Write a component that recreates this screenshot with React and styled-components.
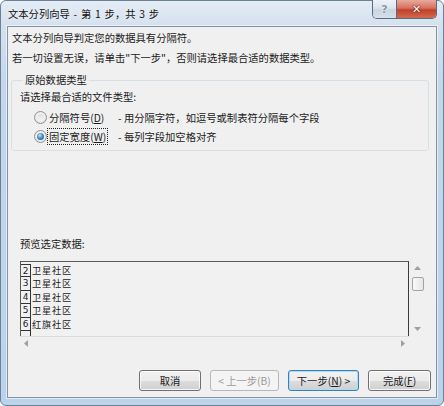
import React from 'react';
import styled, { createGlobalStyle, css } from 'styled-components';

const GlobalStyle = createGlobalStyle`
  html, body {
    margin: 0;
    padding: 0;
    background: #ffffff;
  }
  body {
    font-family: "Noto Sans CJK SC", "Liberation Sans", sans-serif;
    font-size: 10.3px;
    color: #1b1b1b;
  }
`;

const Window = styled.div`
  box-sizing: border-box;
  width: 444px;
  height: 406px;
  display: flex;
  flex-direction: column;
  padding: 0 6px 7px 6px;
  border: 1px solid #6d8196;
  border-radius: 6px;
  background: linear-gradient(180deg, #e4ecf5 0px, #d5e1ee 24px, #c4d7ec 80px, #bad2ea 100%);
`;

const TitleBar = styled.div`
  height: 25px;
  display: flex;
  align-items: flex-start;
  justify-content: space-between;
`;

const Title = styled.div`
  line-height: 25px;
  padding-left: 1px;
  word-spacing: 1.5px;
  color: #111;
  text-shadow: 0 0 6px rgba(255, 255, 255, 0.9);
`;

const Controls = styled.div`
  display: flex;
  margin-top: -1px;
  border: 1px solid #5b6c80;
  border-top: none;
  border-radius: 0 0 5px 5px;
  overflow: hidden;
`;

const CtrlButton = styled.div`
  height: 18px;
  width: ${p => p.$w}px;
  display: flex;
  align-items: center;
  justify-content: center;
  font-family: "DejaVu Sans", sans-serif;
  font-weight: bold;
  font-size: 11px;
  ${p => p.$close
    ? css`
        background: linear-gradient(180deg, #e9a99b 0%, #d7705f 45%, #c2402b 55%, #d06b4c 100%);
        color: #fff;
        text-shadow: 0 0 2px #5a1a10, 0 0 1px #5a1a10;
      `
    : css`
        background: linear-gradient(180deg, #eef3f8 0%, #dbe4ee 45%, #c8d4e2 55%, #d6e0eb 100%);
        color: #8a96a4;
        text-shadow: 0 0 2px #fff;
        border-right: 1px solid #5b6c80;
      `}
`;

const Client = styled.div`
  flex: 1;
  display: flex;
  flex-direction: column;
  background: #f0f0f0;
  border: 1px solid #8193a9;
  box-shadow: 0 0 0 1px rgba(255, 255, 255, 0.55);
`;

const Intro = styled.div`
  padding: 1px 0 0 4px;
  line-height: 20px;
`;

const GroupBox = styled.fieldset`
  margin: 4px 7px 0 3px;
  padding: 0 0 4px 8px;
  border: 1px solid #d5dfe5;
  border-radius: 3px;
  min-width: 0;
`;

const Legend = styled.legend`
  margin-left: 3px;
  padding: 0 2px;
  line-height: 16px;
`;

const Prompt = styled.div`
  line-height: 18px;
  margin-bottom: 2px;
`;

const RadioRow = styled.div`
  display: flex;
  align-items: center;
  height: 19px;
  padding-left: 14px;
`;

const Radio = styled.span`
  box-sizing: border-box;
  width: 13px;
  height: 13px;
  border-radius: 50%;
  border: 1px solid #929292;
  background: radial-gradient(circle at 50% 45%, #ffffff 0%, #f1f1f1 45%, #d6d6d6 100%);
  display: flex;
  align-items: center;
  justify-content: center;
  margin-right: 2px;
  &::after {
    content: '';
    width: 7px;
    height: 7px;
    border-radius: 50%;
    background: ${p => (p.$checked
      ? 'radial-gradient(circle at 40% 35%, #bfe6ff 0%, #4d8dbd 45%, #1b4f79 100%)'
      : 'linear-gradient(180deg, #dedede, #f4f4f4)')};
  }
`;

const RadioLabel = styled.span`
  width: 69px;
  line-height: 15px;
`;

const FocusText = styled.span`
  outline: 1px dotted #222;
  padding: 0 1px;
  margin-left: -1px;
`;

const Key = styled.span`
  text-decoration: underline;
`;

const Desc = styled.span`
  white-space: pre;
`;

const PreviewLabel = styled.div`
  margin-top: 85px;
  padding-left: 12px;
  line-height: 16px;
`;

const Preview = styled.div`
  margin: 9px 0 0 12px;
  width: 406px;
  display: grid;
  grid-template-columns: 1fr 17px;
  grid-template-rows: 75px 13px;
`;

const DataBox = styled.div`
  box-sizing: border-box;
  border-top: 1px solid #5a5a5a;
  border-left: 1px solid #5a5a5a;
  border-right: 1px solid #3c3c3c;
  padding-top: 2px;
  overflow: hidden;
  background: #f1f1f1;
`;

const DataRow = styled.div`
  display: flex;
  height: 13.4px;
  line-height: 13.4px;
  font-size: 9.2px;
`;

const RowNum = styled.span`
  box-sizing: border-box;
  width: 10px;
  border-right: 1px solid #333;
  border-bottom: 1px solid #333;
  border-top: ${p => (p.$first ? '1px solid #333' : 'none')};
  text-align: center;
  font-family: "DejaVu Sans", sans-serif;
  font-size: 9px;
  color: #222;
`;

const Cell = styled.span`
  padding-left: 1px;
  letter-spacing: 0.8px;
  color: #1a1a1a;
`;

const VScroll = styled.div`
  display: flex;
  flex-direction: column;
  align-items: center;
`;

const ArrowSlot = styled.div`
  height: 14px;
  display: flex;
  align-items: center;
  justify-content: center;
  margin-top: ${p => (p.$bottom ? 'auto' : '0')};
`;

const Thumb = styled.div`
  box-sizing: border-box;
  width: 12px;
  height: 14px;
  margin-top: 2px;
  border: 1px solid #a3a3a3;
  border-radius: 2px;
  background: linear-gradient(90deg, #fafafa, #e6e6e6);
`;

const HScroll = styled.div`
  border-top: 1px solid #dcdcdc;
  display: flex;
  align-items: center;
  justify-content: space-between;
  padding: 0 4px;
`;

const ButtonRow = styled.div`
  margin-top: auto;
  display: flex;
  justify-content: flex-end;
  gap: 9px;
  padding: 0 5px 6px 0;
`;

const Button = styled.button`
  box-sizing: border-box;
  width: ${p => p.$w}px;
  height: 21px;
  padding: 0;
  font: inherit;
  color: #1b1b1b;
  border: 1px solid #707070;
  border-radius: 3px;
  background: linear-gradient(180deg, #f2f2f2 0%, #ebebeb 50%, #dddddd 51%, #cfcfcf 100%);
  box-shadow: inset 0 0 0 1px rgba(255, 255, 255, 0.8);
  ${p => p.$focus && css`
    border-color: #3c7fb1;
    box-shadow: inset 0 0 0 1px #a9dcf6;
  `}
  &:disabled {
    color: #9a9a9a;
    border-color: #b5b9bc;
    background: #f4f4f4;
    box-shadow: none;
  }
`;

const Arrow = ({ dir }) => {
  const shapes = {
    up: '0,4 3.5,0 7,4',
    down: '0,0 3.5,4 7,0',
    left: '4,0 0,3.5 4,7',
    right: '0,0 4,3.5 0,7',
  };
  const vertical = dir === 'up' || dir === 'down';
  return (
    <svg width={vertical ? 7 : 4} height={vertical ? 4 : 7}>
      <polygon points={shapes[dir]} fill="#a0a0a0" />
    </svg>
  );
};

const rows = [
  ['2', '卫星社区'],
  ['3', '卫星社区'],
  ['4', '卫星社区'],
  ['5', '卫星社区'],
  ['6', '红旗社区'],
  ['', ''],
];

export default function App() {
  return (
    <>
      <GlobalStyle />
      <Window>
        <TitleBar>
          <Title>文本分列向导 - 第 1 步，共 3 步</Title>
          <Controls>
            <CtrlButton $w={23}>?</CtrlButton>
            <CtrlButton $w={39} $close>✕</CtrlButton>
          </Controls>
        </TitleBar>
        <Client>
          <Intro>
            <div>文本分列向导判定您的数据具有分隔符。</div>
            <div>若一切设置无误，请单击"下一步"，否则请选择最合适的数据类型。</div>
          </Intro>
          <GroupBox>
            <Legend>原始数据类型</Legend>
            <Prompt>请选择最合适的文件类型:</Prompt>
            <RadioRow>
              <Radio />
              <RadioLabel>分隔符号(<Key>D</Key>)</RadioLabel>
              <Desc>- 用分隔字符，如逗号或制表符分隔每个字段</Desc>
            </RadioRow>
            <RadioRow>
              <Radio $checked />
              <RadioLabel><FocusText>固定宽度(<Key>W</Key>)</FocusText></RadioLabel>
              <Desc>- 每列字段加空格对齐</Desc>
            </RadioRow>
          </GroupBox>
          <PreviewLabel>预览选定数据:</PreviewLabel>
          <Preview>
            <DataBox>
              {rows.map(([n, text], i) => (
                <DataRow key={i}>
                  <RowNum $first={i === 0}>{n}</RowNum>
                  <Cell>{text}</Cell>
                </DataRow>
              ))}
            </DataBox>
            <VScroll>
              <ArrowSlot><Arrow dir="up" /></ArrowSlot>
              <Thumb />
              <ArrowSlot $bottom><Arrow dir="down" /></ArrowSlot>
            </VScroll>
            <HScroll>
              <Arrow dir="left" />
              <Arrow dir="right" />
            </HScroll>
          </Preview>
          <ButtonRow>
            <Button $w={62}>取消</Button>
            <Button $w={69} disabled>&lt; 上一步(B)</Button>
            <Button $w={71} $focus>下一步(<Key>N</Key>) &gt;</Button>
            <Button $w={63}>完成(<Key>F</Key>)</Button>
          </ButtonRow>
        </Client>
      </Window>
    </>
  );
}
